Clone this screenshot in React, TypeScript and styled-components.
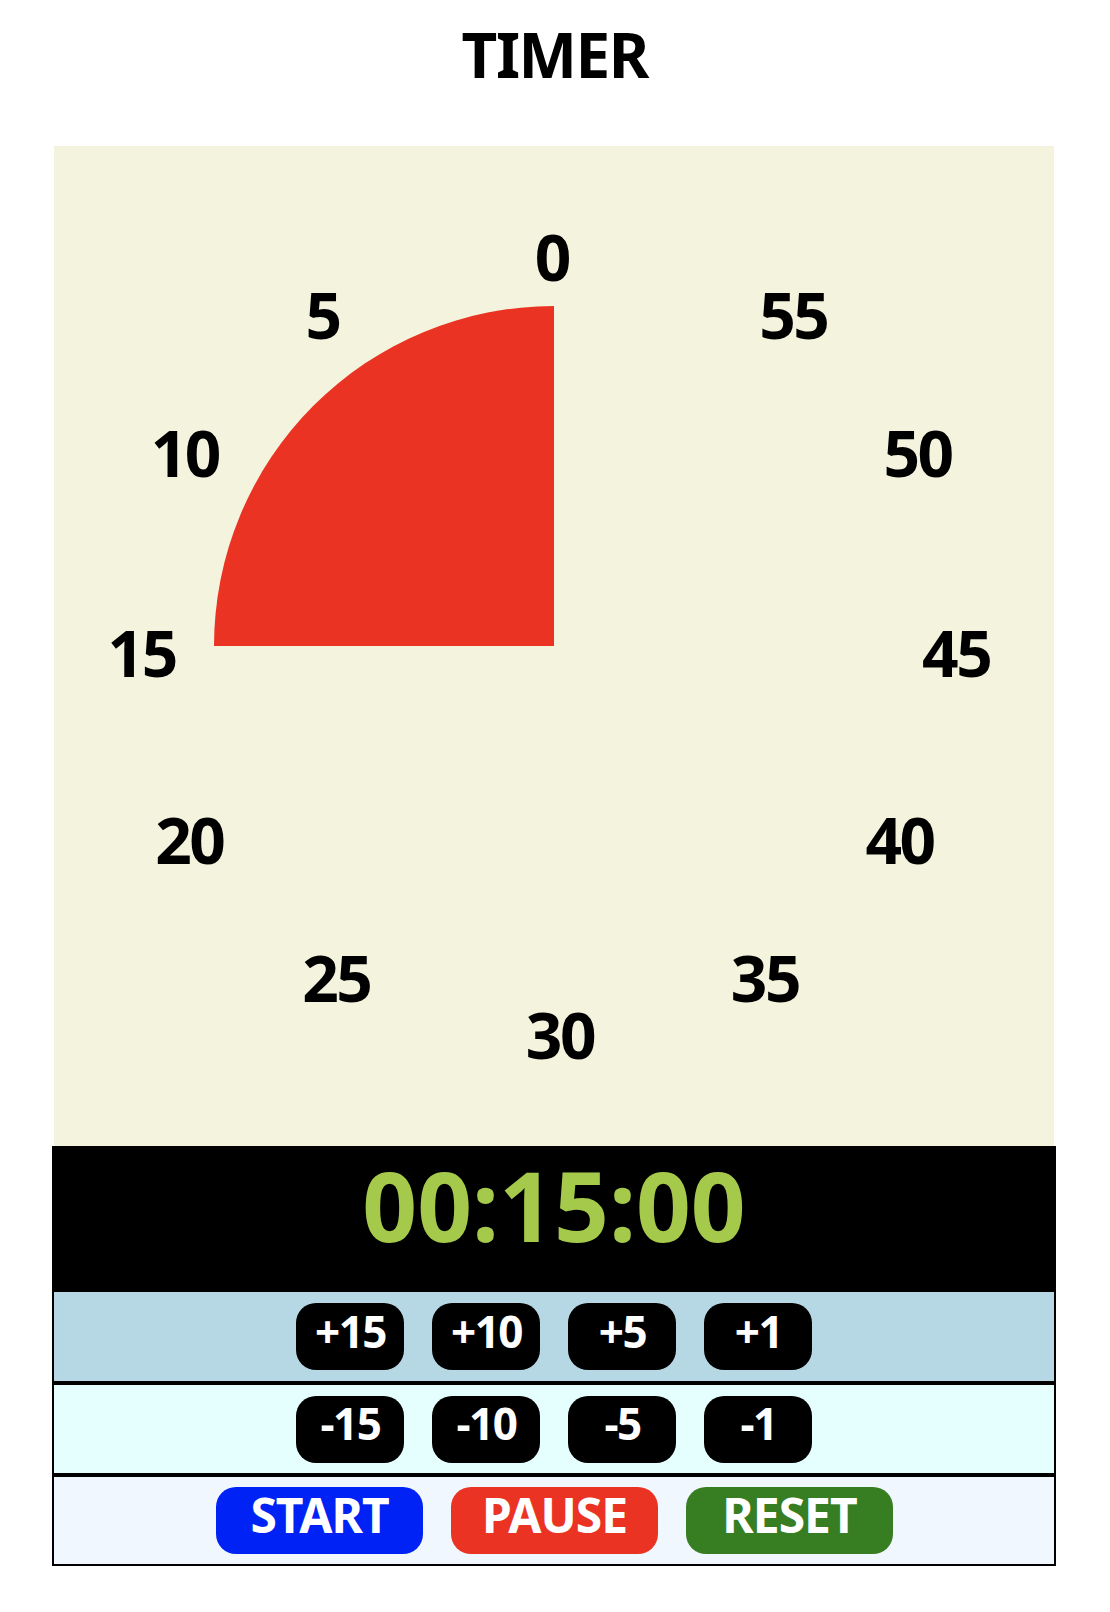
import React from "react";
import styled, { createGlobalStyle } from "styled-components";

const GlobalStyle = createGlobalStyle`
  html, body {
    margin: 0;
    padding: 0;
    background: #ffffff;
  }
  body {
    font-family: "Noto Sans", "Open Sans", sans-serif;
    color: #000000;
  }
  * { box-sizing: content-box; }
`;

const Page = styled.div`
  width: 1108px;
  display: flex;
  flex-direction: column;
  align-items: center;
`;

const Title = styled.h1`
  margin: 23px 0 61px;
  padding-left: 1.5px;
  font-size: 62px;
  line-height: 1;
  font-weight: 700;
  letter-spacing: -1.5px;
`;

const Dial = styled.div`
  position: relative;
  width: 1000px;
  height: 1000px;
  background: #f4f4de;
  display: grid;
  place-items: center;
`;

const Mark = styled.span<{ $x: number; $y: number }>`
  position: absolute;
  left: ${(p) => p.$x}px;
  top: ${(p) => p.$y - 2}px;
  transform: translate(-50%, -50%);
  padding-right: 2.5px;
  font-size: 64px;
  font-weight: 700;
  line-height: 1;
  letter-spacing: -2.5px;
  white-space: nowrap;
`;

const Console = styled.div`
  width: 1004px;
  display: flex;
  flex-direction: column;
`;

const Readout = styled.div`
  border: 2px solid #000;
  background: #000;
  height: 140px;
  display: flex;
  justify-content: center;
  align-items: flex-start;
`;

const Time = styled.div`
  margin-top: 9px;
  font-size: 96px;
  line-height: 1;
  font-weight: 700;
  color: #a5ca4b;
`;

const Row = styled.div<{ $bg: string; $h: number }>`
  border: 2px solid #000;
  background: ${(p) => p.$bg};
  height: ${(p) => p.$h}px;
  display: flex;
  align-items: center;
  justify-content: center;
  gap: 28px;
`;

const StepButton = styled.button`
  width: 108px;
  height: 67px;
  border: 0;
  border-radius: 20px;
  background: #000;
  color: #fff;
  font-family: inherit;
  font-size: 44px;
  font-weight: 700;
  line-height: 1;
  letter-spacing: -1.5px;
  padding: 0 0 12px 1px;
  box-sizing: border-box;
  display: flex;
  align-items: center;
  justify-content: center;
  cursor: pointer;
`;

const ActionButton = styled.button<{ $bg: string }>`
  width: 207px;
  height: 67px;
  border: 0;
  border-radius: 20px;
  background: ${(p) => p.$bg};
  color: #fff;
  font-family: inherit;
  font-size: 48px;
  font-weight: 700;
  line-height: 1;
  letter-spacing: -1px;
  padding: 0 0 11px 1px;
  box-sizing: border-box;
  display: flex;
  align-items: center;
  justify-content: center;
  cursor: pointer;
`;

const marks: { t: string; x: number; y: number }[] = [
  { t: "0", x: 499, y: 112.5 },
  { t: "5", x: 269.7, y: 171 },
  { t: "55", x: 740.5, y: 171 },
  { t: "10", x: 132, y: 309.3 },
  { t: "50", x: 864.8, y: 309.3 },
  { t: "15", x: 88.9, y: 508.7 },
  { t: "45", x: 903.4, y: 508.7 },
  { t: "20", x: 136.6, y: 695.7 },
  { t: "40", x: 846.8, y: 695.7 },
  { t: "25", x: 283.6, y: 833.5 },
  { t: "35", x: 712.2, y: 833.5 },
  { t: "30", x: 507.2, y: 891 },
];

function Wedge({ minutes }: { minutes: number }) {
  const r = 340;
  const a = (minutes / 60) * Math.PI * 2;
  const ex = r - r * Math.sin(a);
  const ey = r - r * Math.cos(a);
  const large = minutes > 30 ? 1 : 0;
  return (
    <svg width={680} height={680} viewBox="0 0 680 680">
      <path
        d={`M${r},${r} L${r},0 A${r},${r} 0 ${large} 0 ${ex},${ey} Z`}
        fill="#ea3323"
      />
    </svg>
  );
}

export default function App() {
  return (
    <>
      <GlobalStyle />
      <Page>
        <Title>TIMER</Title>
        <Dial>
          <Wedge minutes={15} />
          {marks.map((m) => (
            <Mark key={m.t} $x={m.x} $y={m.y}>
              {m.t}
            </Mark>
          ))}
        </Dial>
        <Console>
          <Readout>
            <Time>00:15:00</Time>
          </Readout>
          <Row $bg="#b6d8e4" $h={89}>
            {["+15", "+10", "+5", "+1"].map((s) => (
              <StepButton key={s}>{s}</StepButton>
            ))}
          </Row>
          <Row $bg="#e5fefe" $h={88}>
            {["-15", "-10", "-5", "-1"].map((s) => (
              <StepButton key={s}>{s}</StepButton>
            ))}
          </Row>
          <Row $bg="#f1f7fe" $h={87}>
            <ActionButton $bg="#0022f5">START</ActionButton>
            <ActionButton $bg="#ea3323">PAUSE</ActionButton>
            <ActionButton $bg="#377d22">RESET</ActionButton>
          </Row>
        </Console>
      </Page>
    </>
  );
}
